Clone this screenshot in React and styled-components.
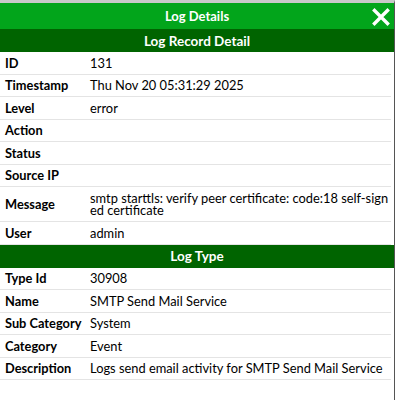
import React from 'react';
import styled, { createGlobalStyle } from 'styled-components';

const GlobalStyle = createGlobalStyle`
  html, body {
    margin: 0;
    padding: 0;
    background: #ffffff;
  }
  body {
    font-family: Lato, "Noto Sans", sans-serif;
    color: #000;
  }
`;

const Dialog = styled.div`
  width: 395px;
  height: 400px;
  box-sizing: border-box;
  border-top: 3px solid #c9c9c9;
  border-right: 1px solid #555;
  background: #fff;
`;

const TitleBar = styled.div`
  position: relative;
  height: 26px;
  background: #02a51b;
  color: #fff;
  font-weight: 700;
  font-size: 13px;
  display: flex;
  align-items: center;
  justify-content: center;
`;

const CloseButton = styled.button`
  position: absolute;
  right: 3px;
  top: 4px;
  width: 20px;
  height: 20px;
  padding: 0;
  border: none;
  background: transparent;
  cursor: pointer;
  display: flex;
  align-items: center;
  justify-content: center;
`;

const SectionHeader = styled.div`
  height: 23px;
  background: #006400;
  color: #fff;
  font-weight: 700;
  font-size: 13.5px;
  display: flex;
  align-items: center;
  justify-content: center;
`;

const Table = styled.div`
  margin-right: 3px;
`;

const Row = styled.div`
  display: grid;
  grid-template-columns: 85px 1fr;
  align-items: center;
  min-height: 22.5px;
  padding-left: 5px;
  border-bottom: 1px solid #e4e4e4;
  box-sizing: border-box;
`;

const Label = styled.div`
  font-weight: 700;
  font-size: 12.8px;
`;

const Value = styled.div`
  font-size: 12.85px;
  line-height: 12px;
  padding: ${p => (p.$multi ? '5px 0' : '0')};
  word-break: break-all;
`;

const recordRows = [
  ['ID', '131'],
  ['Timestamp', 'Thu Nov 20 05:31:29 2025'],
  ['Level', 'error'],
  ['Action', ''],
  ['Status', ''],
  ['Source IP', ''],
  ['Message', 'smtp starttls: verify peer certificate: code:18 self-signed certificate', true],
  ['User', 'admin'],
];

const typeRows = [
  ['Type Id', '30908'],
  ['Name', 'SMTP Send Mail Service'],
  ['Sub Category', 'System'],
  ['Category', 'Event'],
  ['Description', 'Logs send email activity for SMTP Send Mail Service'],
];

const CloseIcon = () => (
  <svg width="18" height="18" viewBox="0 0 18 18">
    <path d="M2.5 2.5 L15.5 15.5 M15.5 2.5 L2.5 15.5" stroke="#fff" strokeWidth="3.4" strokeLinecap="square" />
  </svg>
);

const Rows = ({ rows }) => (
  <Table>
    {rows.map(([label, value, multi]) => (
      <Row key={label}>
        <Label>{label}</Label>
        <Value $multi={multi}>{value}</Value>
      </Row>
    ))}
  </Table>
);

const App = () => (
  <>
    <GlobalStyle />
    <Dialog>
      <TitleBar>
        Log Details
        <CloseButton aria-label="Close">
          <CloseIcon />
        </CloseButton>
      </TitleBar>
      <SectionHeader>Log Record Detail</SectionHeader>
      <Rows rows={recordRows} />
      <SectionHeader>Log Type</SectionHeader>
      <Rows rows={typeRows} />
    </Dialog>
  </>
);

export default App;
